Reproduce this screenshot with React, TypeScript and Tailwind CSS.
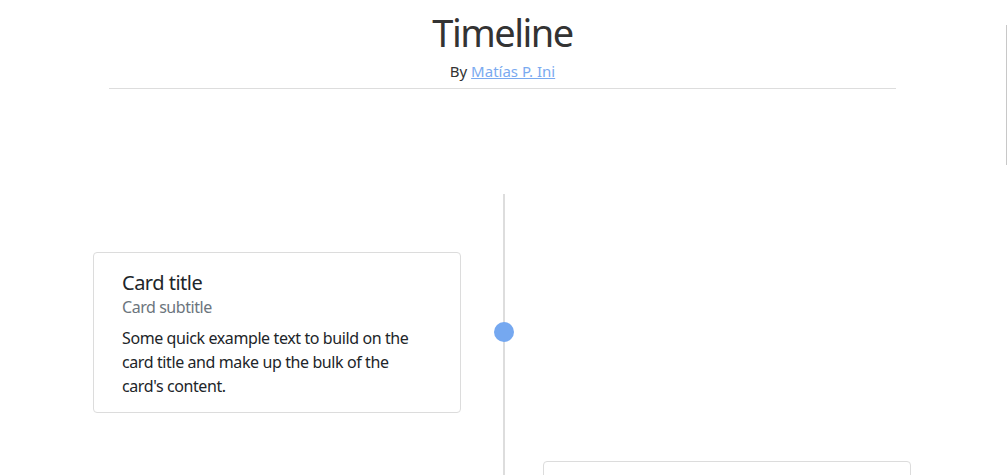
import React from "react";

const font = { fontFamily: '"Noto Sans", "Open Sans", sans-serif' };

function Card() {
  return (
    <div className="w-[368px] rounded-[4px] border border-[#dcdcdc] bg-white px-[28px] pt-[18px] pb-[14px]">
      <h5 className="text-[20px] leading-[24px] tracking-[-0.5px] text-[#212529]">Card title</h5>
      <h6 className="mt-[2px] text-[16px] leading-[20px] tracking-[-0.45px] text-[#6c757d]">Card subtitle</h6>
      <p className="mt-[9px] text-[16px] leading-[24px] tracking-[-0.4px] text-[#212529]">
        Some quick example text to build on the card title and make up the bulk of the card's content.
      </p>
    </div>
  );
}

export default function App() {
  return (
    <div className="relative h-[475px] w-[1007px] overflow-hidden bg-white" style={font}>
      <div className="w-[1005px]">
        <header className="flex flex-col items-center pt-[9px]">
          <h1 className="text-[38px] leading-[46px] tracking-[-1.5px] text-[#333333]">Timeline</h1>
          <p className="mt-[6px] text-[15px] leading-[20px] text-[#333333]">
            By <a href="#" className="text-[#7aaaf0] underline">Matías P. Ini</a>
          </p>
          <div className="mt-[7px] h-px w-[787px] bg-[#dddddd]" />
        </header>

        <section className="relative mt-[105px]">
          <div className="absolute left-[503px] top-0 h-[600px] w-[2px] bg-[#dddddd]" />
          <div className="relative grid grid-cols-[494px_20px_1fr] items-center pt-[58px]">
            <div className="flex justify-end pr-[33px]">
              <Card />
            </div>
            <div className="-mt-[1px] h-[20px] w-[20px] rounded-full bg-[#75a8f0]" />
            <div />
          </div>
          <div className="relative grid grid-cols-[494px_20px_1fr] items-center pt-[48px]">
            <div />
            <div className="h-[20px] w-[20px] rounded-full bg-[#75a8f0]" />
            <div className="pl-[29px]">
              <Card />
            </div>
          </div>
        </section>
      </div>
      <div className="absolute right-0 top-[25px] h-[140px] w-px bg-[#c8c8c8]" />
    </div>
  );
}
